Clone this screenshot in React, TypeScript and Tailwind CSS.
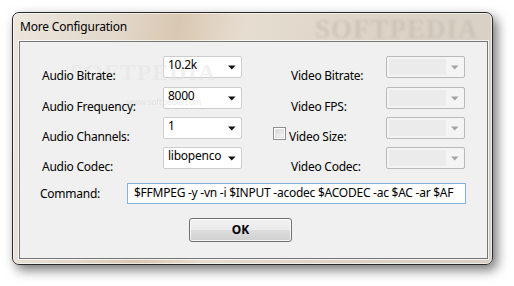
import React from "react";

const font = { fontFamily: '"Noto Sans", "Open Sans", sans-serif' };

function Arrow({ disabled }: { disabled?: boolean }) {
  return (
    <svg width="8" height="5" viewBox="0 0 8 5" className="shrink-0">
      <path d="M0 0.5 H7.5 L3.75 4.5 Z" fill={disabled ? "#a3a3a3" : "#111"} />
    </svg>
  );
}

function Combo({ value }: { value: string }) {
  return (
    <div className="w-[79px] h-[22px] bg-white border border-[#cdcdcd] rounded-[2px] flex items-center pl-[4px] pr-[5px] shrink-0">
      <span className="flex-1 text-[12px] leading-[16px] text-black -translate-y-[2px] whitespace-nowrap tracking-[-0.25px]">{value}</span>
      <Arrow />
    </div>
  );
}

function DisabledCombo() {
  return (
    <div className="w-[79px] h-[22px] bg-[#f4f4f4] border border-[#b9b9b9] rounded-[2px] flex items-center p-[2px] shrink-0">
      <div className="w-[57px] h-[16px] bg-[#ebebeb]" />
      <div className="flex-1 flex justify-center pl-[1px]">
        <Arrow disabled />
      </div>
    </div>
  );
}

function Label({ children, w }: { children: React.ReactNode; w?: string }) {
  return (
    <div className={`${w ?? ""} h-[22px] flex items-end text-[12px] leading-none text-black whitespace-nowrap tracking-[-0.25px] translate-y-[4px]`}>
      {children}
    </div>
  );
}

function Checkbox() {
  return (
    <div className="w-[13px] h-[13px] border border-[#8f8f8f] bg-white p-[1px] shrink-0 translate-y-[10px]">
      <div className="w-full h-full bg-[linear-gradient(135deg,#d6d6d6,#f7f7f7)] border border-[#e2e2e2]" />
    </div>
  );
}

function Row({
  left,
  value,
  right,
  check,
  className,
}: {
  left: string;
  value: string;
  right: string;
  check?: boolean;
  className?: string;
}) {
  return (
    <div className={`flex items-start pl-[22px] ${className ?? ""}`}>
      <Label w="w-[121px]">{left}</Label>
      <Combo value={value} />
      <div className={`w-[144px] flex items-start ${check ? "pl-[31px]" : "pl-[49px]"}`}>
        {check && (
          <div className="w-[16px] h-[22px] flex items-start">
            <Checkbox />
          </div>
        )}
        <Label>{right}</Label>
      </div>
      <DisabledCombo />
    </div>
  );
}

export default function App() {
  return (
    <div className="w-[514px] h-[286px] bg-white pt-[12px] pl-[12px]" style={font}>
      <div className="relative w-[481px] h-[253px] rounded-[7px] border border-[#2a2a2a] bg-[linear-gradient(100deg,#ece6dd_0%,#e2d8cb_20%,#d9c8b1_32%,#e6ddd1_45%,#ddd3c6_70%,#d8d0c6_100%)] shadow-[4px_5px_12px_rgba(0,0,0,0.55)] flex flex-col pl-[6px] pr-[4px] pb-[5px] overflow-hidden">
        <div className="absolute inset-0 rounded-[6px] border border-[rgba(255,255,255,0.6)] pointer-events-none" />
        <div className="h-[28px] flex items-center pl-[1px] relative">
          <span className="text-[12px] text-black leading-none pb-[1px] tracking-[-0.2px]">More Configuration</span>
          <span
            className="absolute left-[296px] top-[3px] text-[27px] font-bold text-[#c9bfb2] opacity-70 tracking-[1px] leading-none blur-[1px]"
            style={{ fontFamily: '"Liberation Serif", serif' }}
          >
            SOFTPEDIA
          </span>
        </div>
        <div className="relative flex-1 border border-[#767676] bg-[#f0f0f0] flex flex-col pt-[14px] shadow-[0_0_0_1px_rgba(255,255,255,0.7)]">
          <div
            className="absolute left-[50px] top-[18px] text-[24px] font-bold text-[#e4e4e4] opacity-50 leading-none tracking-[1px] pointer-events-none"
            style={{ fontFamily: '"Liberation Serif", serif' }}
          >
            SOFTPEDIA
          </div>
          <div className="absolute left-[107px] top-[56px] text-[8px] text-[#d8d8d8] opacity-60 leading-none pointer-events-none">
            www.softpedia.com
          </div>

          <Row left="Audio Bitrate:" value="10.2k" right="Video Bitrate:" />
          <Row className="mt-[9px]" left="Audio Frequency:" value="8000" right="Video FPS:" />
          <Row className="mt-[8px]" left="Audio Channels:" value="1" right="Video Size:" check />
          <Row className="mt-[8px]" left="Audio Codec:" value="libopenco" right="Video Codec:" />

          <div className="flex items-center mt-[14px] pl-[20px]">
            <div className="w-[87px] text-[12px] leading-none text-black tracking-[-0.25px]">Command:</div>
            <div className="w-[339px] h-[21px] bg-white border border-[#87b0dc] flex items-center pl-[6px] overflow-hidden">
              <span className="text-[12px] leading-[16px] text-black whitespace-nowrap -translate-y-[1px] tracking-[-0.25px]">
                $FFMPEG -y -vn -i $INPUT -acodec $ACODEC -ac $AC -ar $AF
              </span>
            </div>
          </div>

          <div className="mt-[14px] pl-[169px]">
            <div className="w-[103px] h-[24px] rounded-[3px] border border-[#707070] bg-[linear-gradient(#f2f2f2_0%,#ebebeb_48%,#dddddd_52%,#cfcfcf_100%)] flex items-center justify-center shadow-[inset_0_0_0_1px_rgba(255,255,255,0.8)]">
              <span className="text-[12px] font-bold leading-none text-black pb-[1px]">OK</span>
            </div>
          </div>
        </div>
      </div>
    </div>
  );
}
